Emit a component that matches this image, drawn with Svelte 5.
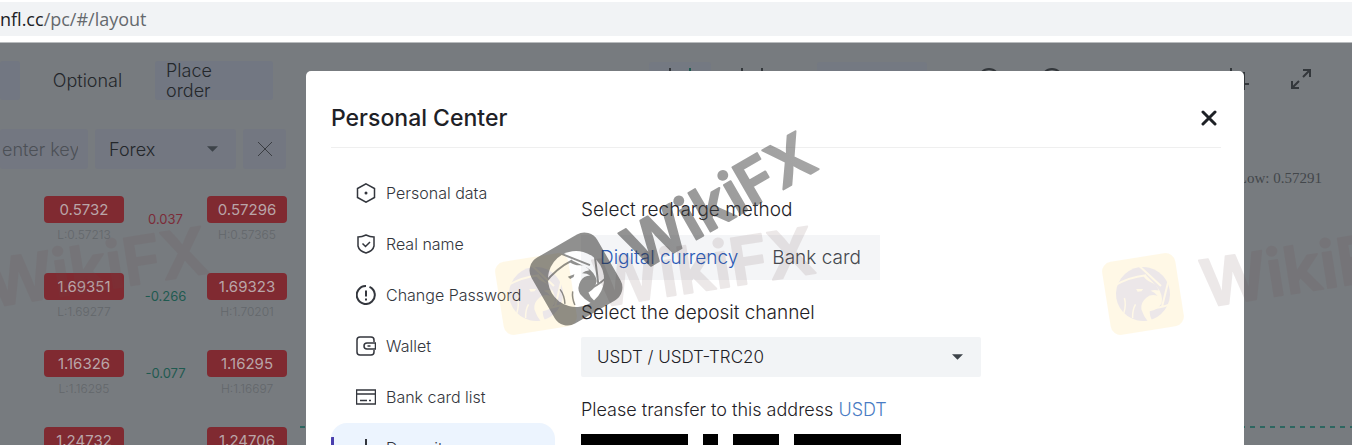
<script>
	const quotes = [
		{ bid: '0.5732', low: '0.57213', change: '0.037', ask: '0.57296', high: '0.57365' },
		{ bid: '1.69351', low: '1.69277', change: '-0.266', ask: '1.69323', high: '1.70201' },
		{ bid: '1.16326', low: '1.16295', change: '-0.077', ask: '1.16295', high: '1.16697' },
		{ bid: '1.24732', low: '1.24601', change: '-0.102', ask: '1.24706', high: '1.25012' }
	];

	const menu = [
		{ icon: 'hexagon', label: 'Personal data' },
		{ icon: 'shield', label: 'Real name' },
		{ icon: 'alert', label: 'Change Password' },
		{ icon: 'wallet', label: 'Wallet' },
		{ icon: 'card', label: 'Bank card list' },
		{ icon: 'deposit', label: 'Deposit' }
	];

	const methods = ['Digital currency', 'Bank card'];

	let active = $state('Deposit');
	let method = $state('Digital currency');
	let channel = $state('USDT / USDT-TRC20');
	let market = $state('Forex');
	let keyword = $state('');
</script>

{#snippet logoCuts(color)}
	<g fill="none" stroke={color} stroke-width="2">
		<path d="M0-29 19-5M-29-12Q-12-19 6-18M28-11 17 15M27 14Q14 17 2 15" />
		<path d="M-22 16Q-18 8-19 1M-14 22Q-13 14-9 9" stroke-width="1.5" />
	</g>
	<path fill={color} d="M14 4Q8 1 3 4-4 8-4 15-3 22 1 29L5 28Q3 22 4 18 12 18 17 12 20 4 15-5L6-18 3-18Q5-13 10-10 15-7 16-1 12-3 8-2 12 0 14 4Z" />
	<path fill={color} d="M-6-6 1-5-1-3-5-3Z" />
{/snippet}

{#snippet lightMark(x)}
	<g transform="translate({x} 294) rotate(-9)" opacity="0.12">
		<rect x="-37" y="-37" width="74" height="74" rx="10" fill="#ffc83c" />
		<circle r="27" fill="#6a4250" />
		{@render logoCuts('#ffc83c')}
		<text class="mark light" x="59" y="23">WikiFX</text>
	</g>
{/snippet}

<div class="page">
	<div class="url-bar">
		<div class="url"><b>nfl.cc</b>/pc/#/layout</div>
	</div>

	<div class="app">
		<aside class="market">
			<nav class="tabs">
				<button class="tab filled first" aria-label="All"></button>
				<button class="tab">Optional</button>
				<button class="tab filled order">Place order</button>
			</nav>
			<div class="filters">
				<input type="text" placeholder="enter key word" aria-label="Search" bind:value={keyword} />
				<div class="select">
					<select aria-label="Market" bind:value={market}>
						<option>Forex</option>
						<option>Crypto</option>
					</select>
					<svg viewBox="0 0 12 6"><path d="M0 0h12L6 6z" /></svg>
				</div>
				<button class="clear" aria-label="Clear">
					<svg viewBox="0 0 14 14"><path d="M0 0 14 14M14 0 0 14" /></svg>
				</button>
			</div>
			{#each quotes as quote}
				<div class="quote">
					<div class="side">
						<span class="price">{quote.bid}</span>
						<span class="range">L:{quote.low}</span>
					</div>
					<span class="change" class:down={quote.change.startsWith('-')}>{quote.change}</span>
					<div class="side">
						<span class="price">{quote.ask}</span>
						<span class="range">H:{quote.high}</span>
					</div>
				</div>
			{/each}
		</aside>

		<section class="chart">
			<div class="toolbar">
				<div class="chip"><svg class="candles" viewBox="0 0 26 22"><path d="M3 0v22M0 5h6v12H0z" /><path class="up" d="M23 0v22M20 5h6v12h-6z" /></svg></div>
				<div class="chip plain"><svg class="candles" viewBox="0 0 26 22"><path d="M3 0v22M23 0v22" /></svg></div>
				<div class="chip wide"></div>
				<svg class="round" viewBox="0 0 22 22"><circle cx="11" cy="11" r="10" /></svg>
				<svg class="round" viewBox="0 0 22 22"><circle cx="11" cy="11" r="10" /></svg>
				<svg class="crop" viewBox="0 0 22 22"><path d="M4 0v16h18M0 5h17v17" /></svg>
				<svg class="expand" viewBox="0 0 20 20"><path d="M12 8 19 1M12 1h7v7M8 12 1 19M1 12v7h7" /></svg>
			</div>
			<div class="low">Low: 0.57291</div>
			<div class="price-line"></div>
		</section>

		<div class="overlay">
			<div class="modal" role="dialog" aria-labelledby="modal-title">
				<header>
					<h2 id="modal-title">Personal Center</h2>
					<button class="close" aria-label="Close">
						<svg viewBox="0 0 16 16"><path d="M2 2 14 14M14 2 2 14" /></svg>
					</button>
				</header>
				<div class="body">
					<nav class="menu">
						{#each menu as item}
							<button class:active={active === item.label} onclick={() => (active = item.label)}>
								<svg viewBox="0 0 20 20">
									{#if item.icon === 'hexagon'}
										<path d="M10 .8 18.500 5.500v9L10 19.200 1.500 14.500v-9z" />
										<circle class="dot" cx="10" cy="10" r="1.500" />
									{:else if item.icon === 'shield'}
										<path d="M10 1Q14 3 18 3v9q-1 5-8 7-7-2-8-7V3q4 0 8-2zM6.500 9.500l3 3 4.500-4.500" />
									{:else if item.icon === 'alert'}
										<path class="bold" d="M13.500 1.800A9 9 0 1 1 10 1M15.500 3a9 9 0 0 1 3 4M10 5.500v6M10 13.500v2" />
									{:else if item.icon === 'wallet'}
										<path d="M18 6V4q0-3-3-3H4Q1 1 1 4v12q0 3 3 3h11q3 0 3-3v-2M19.500 7H11q-3 0-3 3t3 3h8.500zM11.500 10h3" />
									{:else if item.icon === 'card'}
										<path d="M.5 3h19v14H.5zM.5 7h19M4 13.500h7M13 13.500h2" />
									{:else}
										<path class="bold" d="M10 1v13M5 9l5 5 5-5M1 14v5h18v-5" />
									{/if}
								</svg>
								{item.label}
							</button>
						{/each}
					</nav>
					<div class="content">
						<div class="caption">Select recharge method</div>
						<div class="methods">
							{#each methods as name}
								<button class:current={method === name} onclick={() => (method = name)}>{name}</button>
							{/each}
						</div>
						<label class="caption" for="channel">Select the deposit channel</label>
						<div class="select channel">
							<select id="channel" bind:value={channel}>
								<option>USDT / USDT-TRC20</option>
								<option>USDT / USDT-ERC20</option>
							</select>
							<svg viewBox="0 0 12 6"><path d="M0 0h12L6 6z" /></svg>
						</div>
						<div class="caption address">Please transfer to this address <a href="#usdt">USDT</a></div>
						<svg class="qr" viewBox="0 0 21 21" shape-rendering="crispEdges">
							<path d="M0 0h7v7H0zM14 0h7v7h-7zM0 14h7v7H0zM8 0h1v1H8zM10 0h3v1h-3z" />
							<path class="hole" d="M1 1h5v5H1zM15 1h5v5h-5zM1 15h5v5H1z" />
							<path d="M2 2h3v3H2zM16 2h3v3h-3zM2 16h3v3H2z" />
						</svg>
					</div>
				</div>
			</div>
		</div>
	</div>

	<svg class="watermarks" viewBox="0 0 1352 445" aria-hidden="true">
		<defs>
			<mask id="logo-mask">
				<rect x="-40" y="-40" width="80" height="80" fill="#fff" />
				<circle r="28" fill="#000" />
				{@render logoCuts('#fff')}
			</mask>
			<linearGradient id="mark-fade">
				<stop offset="0" stop-color="#303030" />
				<stop offset="1" stop-color="#555" />
			</linearGradient>
		</defs>
		{@render lightMark(-71)}
		{@render lightMark(536)}
		{@render lightMark(1143)}
		<g transform="translate(576 279) rotate(-30)" opacity="0.52">
			<rect x="-38" y="-38" width="76" height="76" rx="15" fill="#2c2c2a" mask="url(#logo-mask)" />
			<text class="mark" x="58" y="26" fill="url(#mark-fade)" stroke="url(#mark-fade)">WikiFX</text>
		</g>
	</svg>
</div>

<style>
	:global(body) {
		margin: 0;
	}
	.page {
		position: relative;
		display: flex;
		flex-direction: column;
		height: 100vh;
		overflow: hidden;
		background: #777b7f;
		color: #1e2126;
		font-family: Inter, "Liberation Sans", sans-serif;
		font-size: 17px;
		font-weight: 300;
	}
	button, input, select {
		margin: 0;
		padding: 0;
		border: 0;
		background: none;
		color: inherit;
		font: inherit;
	}
	svg {
		flex: none;
		fill: none;
		stroke: currentColor;
	}

	.url-bar {
		flex: none;
		padding: 2px 0 6px;
		background: #fff;
		border-bottom: 1px solid #b9bcbe;
	}
	.url {
		background: #f1f3f5;
		color: #65696d;
		font: 18px/34px "Open Sans", "Noto Sans", sans-serif;
	}
	.url b {
		color: #202124;
		font-weight: 400;
	}

	.app {
		position: relative;
		flex: 1;
		display: flex;
		min-height: 0;
	}
	.market {
		flex: none;
		width: 300px;
		color: #24272b;
		font-size: 18px;
	}
	.tabs {
		display: flex;
		gap: 14px;
		padding-top: 18px;
	}
	.tab {
		width: 107px;
		height: 39px;
		line-height: 20px;
	}
	.tab.filled {
		background: #727782;
		border-radius: 3px;
	}
	.tab.first {
		width: 20px;
	}
	.tab.order {
		width: 118px;
		padding: 0 48px 0 11px;
		text-align: left;
	}
	.filters {
		display: flex;
		gap: 7px;
		padding: 29px 0 27px;
	}
	.filters input, .filters .select, .clear {
		box-sizing: border-box;
		height: 40px;
		background: #737781;
		border-radius: 3px;
	}
	.filters input {
		width: 88px;
		padding: 0 10px 0 2px;
	}
	.filters input::placeholder {
		color: #4c5056;
		opacity: 1;
	}
	.filters .select {
		width: 141px;
	}
	.clear {
		width: 43px;
	}
	.clear svg {
		width: 14px;
		height: 14px;
		color: #3a3d42;
	}
	.select {
		display: grid;
		align-items: center;
	}
	.select select, .select svg {
		grid-area: 1 / 1;
	}
	.select select {
		appearance: none;
		width: 100%;
		height: 40px;
		padding: 0 16px;
	}
	.filters .select select {
		padding: 0 14px;
	}
	.select svg {
		justify-self: end;
		width: 11px;
		height: 6px;
		margin-right: 18px;
		fill: #3d4349;
		stroke: none;
		pointer-events: none;
	}

	.quote {
		display: grid;
		grid-template-columns: 80px 83px 80px;
		height: 77px;
		padding-left: 44px;
		text-align: center;
	}
	.price {
		display: block;
		background: #802a31;
		border-radius: 4px;
		color: #b9a5a8;
		font-size: 15px;
		font-weight: 400;
		line-height: 27px;
	}
	.range {
		display: block;
		color: #63676b;
		font-size: 12px;
		line-height: 24px;
	}
	.change {
		padding-top: 13px;
		color: #7c2b38;
		font-size: 13px;
		font-weight: 400;
		line-height: 20px;
	}
	.change.down {
		color: #1f5a50;
	}

	.chart {
		flex: 1;
		display: flex;
		flex-direction: column;
		min-width: 0;
		color: #33373b;
	}
	.toolbar {
		display: flex;
		align-items: center;
		justify-content: flex-end;
		height: 34px;
		margin-top: 19px;
		padding-right: 41px;
	}
	.toolbar svg {
		width: 22px;
		height: 22px;
		stroke-width: 2;
	}
	.toolbar .candles {
		width: 26px;
	}
	.candles .up {
		stroke: #1f5a50;
	}
	.chip {
		display: flex;
		justify-content: center;
		align-items: center;
		width: 62px;
		height: 34px;
		background: #747982;
		border-radius: 3px;
	}
	.chip.plain {
		margin: 0 34px 0 10px;
		background: none;
	}
	.chip.wide {
		width: 110px;
		margin-right: 51px;
	}
	.toolbar .round {
		margin-right: 41px;
	}
	.toolbar .crop {
		margin: 0 42px 0 123px;
	}
	.toolbar .expand {
		width: 20px;
		height: 20px;
	}
	.low {
		margin-top: 72px;
		padding-right: 30px;
		color: #43474b;
		font: 15px/20px "Liberation Serif", serif;
		text-align: right;
	}
	.price-line {
		height: 2px;
		margin-top: 238px;
		background: repeating-linear-gradient(90deg, #2d6660 0 5px, transparent 5px 10px);
	}

	.overlay {
		position: absolute;
		inset: 0;
		display: flex;
		padding: 28px 108px 0 306px;
	}
	.modal {
		flex: 1;
		min-width: 0;
		padding: 0 23px 0 25px;
		background: #fff;
		border-radius: 5px 5px 0 0;
	}
	header {
		display: flex;
		align-items: center;
		justify-content: space-between;
		box-sizing: border-box;
		height: 77px;
		padding: 18px 4px 0 0;
		border-bottom: 1px solid #efefef;
	}
	h2 {
		margin: 0;
		font-size: 23px;
		font-weight: 500;
	}
	.close svg {
		display: block;
		width: 16px;
		height: 16px;
		stroke-width: 3;
		stroke-linecap: round;
	}
	.body {
		display: flex;
		gap: 26px;
	}
	.menu {
		flex: none;
		width: 224px;
		padding-top: 20px;
	}
	.menu button {
		display: flex;
		align-items: center;
		gap: 10px;
		box-sizing: border-box;
		width: 100%;
		height: 51px;
		padding: 0 0 2px 25px;
		color: #33363d;
		font-size: 16px;
	}
	.menu button.active {
		background: linear-gradient(#4a3fae, #4a3fae) 0 14px / 3px 26px no-repeat #ecf4fe;
		border-radius: 16px;
	}
	.menu svg {
		width: 20px;
		height: 20px;
		stroke-width: 1.500;
	}
	.menu .bold {
		stroke-width: 2;
	}
	.menu .dot {
		fill: currentColor;
		stroke: none;
	}
	.content {
		padding-top: 49px;
	}
	.caption {
		display: block;
		font-size: 19px;
		line-height: 26px;
	}
	.caption.address {
		font-size: 18px;
	}
	.caption a {
		color: #4a7cc4;
		text-decoration: none;
	}
	.methods {
		display: inline-flex;
		gap: 34px;
		margin: 12px 0 20px;
		padding: 0 19px;
		background: #f4f5f7;
		color: #45484e;
		font-size: 19px;
		line-height: 45px;
	}
	.methods .current {
		color: #2a5bb8;
	}
	.channel {
		width: 400px;
		margin: 11px 0 20px;
		background: #f2f4f6;
		border-radius: 2px;
	}
	.qr {
		display: block;
		width: 320px;
		height: 320px;
		margin-top: 11px;
		fill: #000;
		stroke: none;
	}
	.qr .hole {
		fill: #fff;
	}

	.watermarks {
		position: absolute;
		top: 0;
		left: 0;
		width: 100%;
		stroke: none;
		pointer-events: none;
	}
	.mark {
		font-size: 61px;
		font-weight: 600;
		stroke-width: 2;
		stroke-linejoin: round;
	}
	.mark.light {
		fill: #6a4a4c;
		stroke: #6a4a4c;
		font-size: 65px;
	}
</style>
